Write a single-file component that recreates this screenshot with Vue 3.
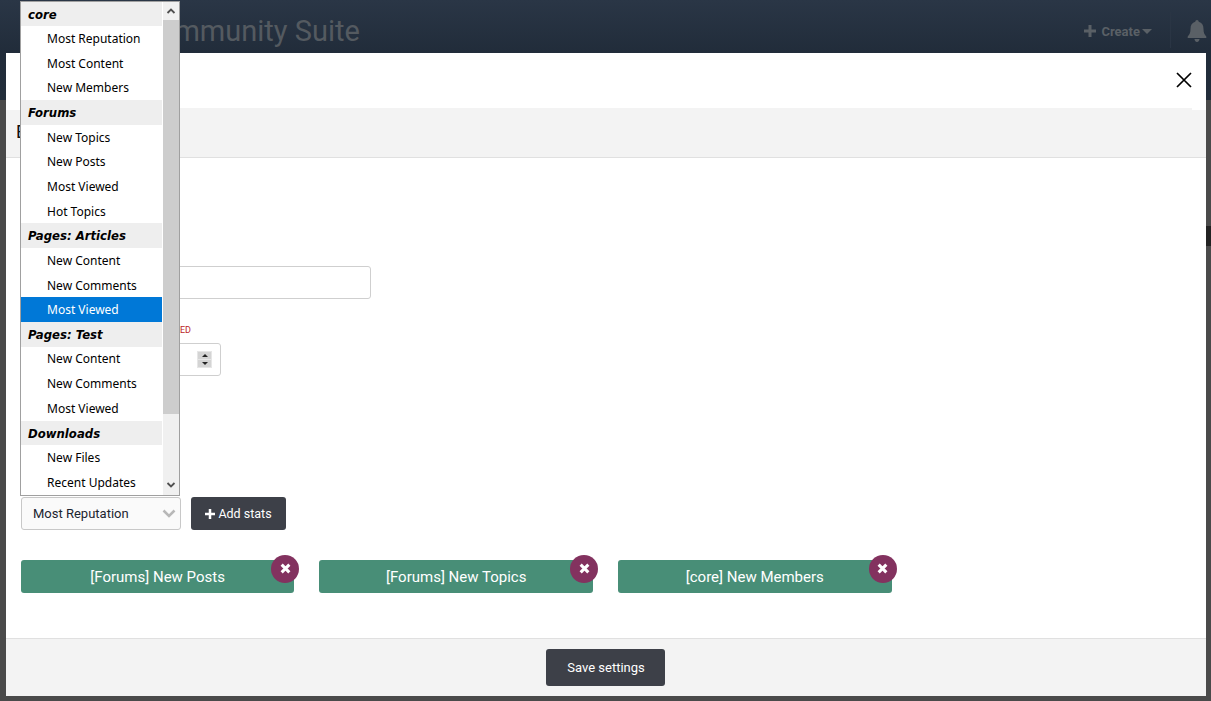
<script setup>
import { ref } from 'vue'

const groups = ref([
  { name: 'core', items: ['Most Reputation', 'Most Content', 'New Members'] },
  { name: 'Forums', items: ['New Topics', 'New Posts', 'Most Viewed', 'Hot Topics'] },
  { name: 'Pages: Articles', items: ['New Content', 'New Comments', 'Most Viewed'] },
  { name: 'Pages: Test', items: ['New Content', 'New Comments', 'Most Viewed'] },
  { name: 'Downloads', items: ['New Files', 'Recent Updates'] }
])

const stats = ref(['[Forums] New Posts', '[Forums] New Topics', '[core] New Members'])
</script>

<template>
  <div class="page">
    <header class="topbar">
      <div class="brand">Community Suite</div>
      <div class="flex-1"></div>
      <div class="create">
        <svg class="plus" viewBox="0 0 12 12"><path d="M4.500 0h3v4.500H12v3H7.500V12h-3V7.500H0v-3h4.500z" /></svg>
        <span>Create</span>
        <i class="caret"></i>
      </div>
      <div class="sep"></div>
      <svg class="bell" viewBox="0 0 20 22"><path d="M10 0c1 0 1.600.7 1.700 1.800C15 2.600 16.500 5 16.500 9c0 4 1 5.500 2.800 7.500v1.500H.7v-1.500C2.500 14.500 3.500 13 3.500 9c0-4 1.500-6.400 4.800-7.200C8.400.7 9 0 10 0zM7.500 19h5c0 1.500-1 3-2.500 3s-2.500-1.500-2.500-3z" /></svg>
    </header>

    <div class="peek"></div>

    <main class="modal">
      <div class="modal-head">
        <svg class="close" viewBox="0 0 16 16"><path d="M1 1l14 14M15 1L1 15" /></svg>
      </div>
      <div class="tabbar"><span class="tab-title">Edit</span></div>

      <div class="body">
        <div class="text-input"></div>
        <div class="required">REQUIRED</div>
        <div class="number-input">
          <div class="spinner">
            <span class="spin up"></span>
            <span class="spin down"></span>
          </div>
        </div>

        <div class="add-row">
          <div class="select">
            <span>Most Reputation</span>
            <svg class="chev" viewBox="0 0 14 9"><path d="M1.500 1.500L7 7l5.500-5.500" /></svg>
          </div>
          <button class="btn add">
            <svg class="btn-plus" viewBox="0 0 12 12"><path d="M4.500 0h3v4.500H12v3H7.500V12h-3V7.500H0v-3h4.500z" /></svg>
            Add stats
          </button>
        </div>

        <div class="chips">
          <div class="chip" v-for="stat in stats" :key="stat">
            {{ stat }}
            <span class="remove">
              <svg viewBox="0 0 10 10"><path d="M1.500 1.500l7 7M8.500 1.500l-7 7" /></svg>
            </span>
          </div>
        </div>
      </div>

      <footer class="modal-foot">
        <button class="btn save">Save settings</button>
      </footer>
    </main>

    <div class="dropdown">
      <div class="list">
        <template v-for="group in groups" :key="group.name">
          <div class="group"><span>{{ group.name }}</span></div>
          <div
            class="option"
            :class="{ selected: group.name === 'Pages: Articles' && item === 'Most Viewed' }"
            v-for="item in group.items"
            :key="item"
          ><span>{{ item }}</span></div>
        </template>
      </div>
      <div class="scrollbar">
        <div class="arrow">
          <svg viewBox="0 0 10 6"><path d="M1.500 5L5 1.500 8.500 5" /></svg>
        </div>
        <div class="thumb"></div>
        <div class="flex-1"></div>
        <div class="arrow bottom">
          <svg viewBox="0 0 10 6"><path d="M1.500 1L5 4.500 8.500 1" /></svg>
        </div>
      </div>
    </div>
  </div>
</template>

<style scoped>
* {
  box-sizing: border-box;
}
.flex-1 {
  flex: 1 1 0%;
}
.page {
  position: relative;
  width: 1211px;
  height: 701px;
  overflow: hidden;
  background: #4a4a4a;
  font-family: Roboto, sans-serif;
}
.topbar {
  display: flex;
  align-items: flex-start;
  height: 100px;
  margin-bottom: -47px;
  padding: 13px 4px 0 139px;
  background: linear-gradient(#2a3646, #212c3a 53px, #222d3a);
  color: #545a60;
}
.brand {
  margin-top: 1px;
  font-size: 29px;
  line-height: 34px;
  white-space: nowrap;
}
.create {
  display: flex;
  align-items: center;
  height: 36px;
  font-size: 13px;
  font-weight: 700;
  color: #5a6066;
}
.plus {
  width: 12px;
  height: 12px;
  margin-right: 5px;
  fill: #5a6066;
}
.caret {
  margin-left: 2px;
  border-left: 5px solid transparent;
  border-right: 5px solid transparent;
  border-top: 5px solid #5a6066;
}
.sep {
  width: 1px;
  height: 36px;
  margin: -1px 16px 0 18px;
  background: #2a3544;
}
.bell {
  width: 20px;
  height: 22px;
  margin-top: 7px;
  fill: #5a6066;
}
.peek {
  position: absolute;
  right: 0;
  top: 226px;
  width: 6px;
  height: 20px;
  background: #222;
}
.modal {
  position: relative;
  display: flex;
  flex-direction: column;
  height: 643px;
  margin: 0 5px 0 6px;
  background: #fff;
}
.modal-head {
  display: flex;
  justify-content: flex-end;
  align-items: center;
  height: 57px;
  padding: 0 14px 4px 0;
}
.close {
  width: 16px;
  height: 16px;
  fill: none;
  stroke: #000;
  stroke-width: 1.700;
}
.tabbar {
  position: relative;
  height: 48px;
  padding: 11px 0 0 10px;
  background: #f3f3f3;
  border-bottom: 1px solid #e0e0e0;
  font-size: 18px;
  color: #111;
}
.tabbar::before {
  content: '';
  position: absolute;
  left: 170px;
  right: 14px;
  top: -2px;
  height: 2px;
  background: #f3f3f3;
}
.body {
  position: relative;
  flex: 1;
  padding: 108px 15px 0;
}
.text-input {
  width: 350px;
  height: 33px;
  border: 1px solid #cfcfcf;
  border-radius: 3px;
}
.required {
  margin-top: 25px;
  margin-left: 100px;
  height: 19px;
  width: 70px;
  text-align: right;
  font-size: 9px;
  line-height: 12px;
  color: #bb1f28;
}
.number-input {
  display: flex;
  justify-content: flex-end;
  align-items: center;
  width: 200px;
  height: 33px;
  padding-right: 8px;
  border: 1px solid #cfcfcf;
  border-radius: 3px;
}
.spinner {
  display: flex;
  flex-direction: column;
  width: 15px;
  height: 17px;
  gap: 1px;
  background: #e6e6e6;
  padding: 1px;
}
.spin {
  flex: 1;
  display: flex;
  align-items: center;
  justify-content: center;
  background: #d4d4d4;
}
.spin::after {
  content: '';
  border-left: 3.500px solid transparent;
  border-right: 3.500px solid transparent;
}
.up::after {
  border-bottom: 3.500px solid #222;
}
.down::after {
  border-top: 3.500px solid #222;
}
.add-row {
  display: flex;
  gap: 10px;
  margin-top: 121px;
}
.select {
  display: flex;
  align-items: center;
  justify-content: space-between;
  width: 160px;
  height: 33px;
  padding: 0 4px 0 11px;
  border: 1px solid #c8c8c8;
  border-radius: 3px;
  background: #fafafa;
  font-size: 13px;
  color: #1c2530;
}
.chev {
  width: 14px;
  height: 9px;
  fill: none;
  stroke: #b8b8b8;
  stroke-width: 2.500;
}
.btn {
  border: none;
  border-radius: 3px;
  background: #3d4048;
  color: #fff;
  font-family: Roboto, sans-serif;
  font-size: 13px;
  font-weight: 400;
}
.add {
  display: flex;
  align-items: center;
  justify-content: center;
  gap: 3px;
  width: 95px;
  height: 33px;
  font-size: 12.500px;
}
.btn-plus {
  width: 10px;
  height: 10px;
  fill: #fff;
}
.chips {
  display: flex;
  gap: 25px;
  margin: 30px 0 0 -0.200px;
}
.chip {
  position: relative;
  width: 273.600px;
  height: 33px;
  line-height: 35px;
  text-align: center;
  border-radius: 3px;
  background: #488e77;
  color: #fff;
  font-size: 15px;
}
.remove {
  position: absolute;
  top: -5px;
  right: -5px;
  display: flex;
  align-items: center;
  justify-content: center;
  width: 28px;
  height: 28px;
  padding-bottom: 1px;
  border-radius: 50%;
  background: #83325f;
}
.remove svg {
  width: 11px;
  height: 11px;
  fill: none;
  stroke: #fff;
  stroke-width: 2.800;
}
.modal-foot {
  display: flex;
  justify-content: center;
  align-items: center;
  height: 58px;
  padding-right: 2px;
  background: #f3f3f3;
  border-top: 1px solid #e0e0e0;
}
.save {
  width: 119px;
  height: 37px;
  padding-left: 8px;
}
.dropdown {
  position: absolute;
  left: 20px;
  top: 1px;
  display: flex;
  width: 160px;
  height: 495px;
  border: 1px solid #a0a0a0;
  background: #fff;
  font-family: "Noto Sans", sans-serif;
  font-size: 12px;
  color: #000;
}
.list {
  width: 141px;
  overflow: hidden;
  margin-top: -0.500px;
}
.group, .option {
  height: 24.660px;
  line-height: 24.660px;
  white-space: nowrap;
}
.group {
  padding-left: 7px;
  background: #eee;
  font-family: "DejaVu Sans", sans-serif;
  font-weight: 700;
  font-style: italic;
  font-size: 11.700px;
}
.group span {
  position: relative;
  top: 1px;
}
.option {
  padding-left: 26px;
}
.option span {
  position: relative;
  top: 0.800px;
}
.selected {
  background: #0078d7;
  color: #fff;
}
.scrollbar {
  display: flex;
  flex-direction: column;
  width: 16px;
  margin-left: 1px;
  background: #f0f0f0;
}
.arrow {
  display: flex;
  align-items: center;
  justify-content: center;
  height: 18px;
}
.arrow.bottom {
  height: 20px;
}
.arrow svg {
  width: 10px;
  height: 6px;
  fill: none;
  stroke: #505050;
  stroke-width: 1.800;
}
.thumb {
  height: 394px;
  background: #cdcdcd;
}
</style>
